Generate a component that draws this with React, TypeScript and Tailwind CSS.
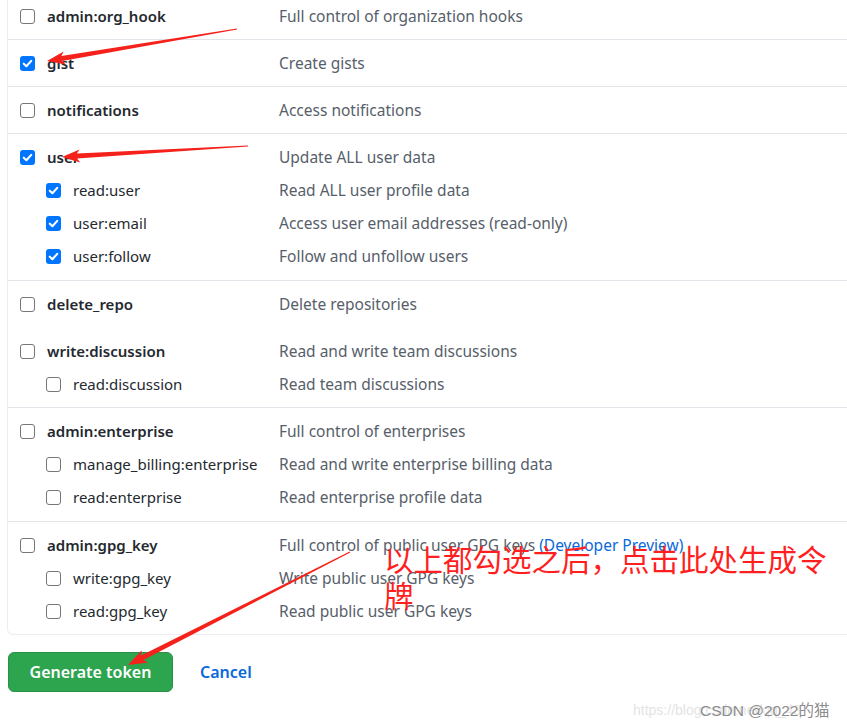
import React from "react";

type Item = { name: string; desc: React.ReactNode; checked?: boolean };
type Group = { top: Item; subs?: Item[]; border?: boolean; pb: string };

const groups: Group[] = [
  { top: { name: "admin:org_hook", desc: "Full control of organization hooks" }, border: true, pb: "pb-[6px]" },
  { top: { name: "gist", desc: "Create gists", checked: true }, border: true, pb: "pb-[6px]" },
  { top: { name: "notifications", desc: "Access notifications" }, border: true, pb: "pb-[6px]" },
  {
    top: { name: "user", desc: "Update ALL user data", checked: true },
    subs: [
      { name: "read:user", desc: "Read ALL user profile data", checked: true },
      { name: "user:email", desc: "Access user email addresses (read-only)", checked: true },
      { name: "user:follow", desc: "Follow and unfollow users", checked: true },
    ],
    border: true,
    pb: "pb-[7px]",
  },
  { top: { name: "delete_repo", desc: "Delete repositories" }, border: false, pb: "pb-[7px]" },
  {
    top: { name: "write:discussion", desc: "Read and write team discussions" },
    subs: [{ name: "read:discussion", desc: "Read team discussions" }],
    border: true,
    pb: "pb-[6px]",
  },
  {
    top: { name: "admin:enterprise", desc: "Full control of enterprises" },
    subs: [
      { name: "manage_billing:enterprise", desc: "Read and write enterprise billing data" },
      { name: "read:enterprise", desc: "Read enterprise profile data" },
    ],
    border: true,
    pb: "pb-[7px]",
  },
  {
    top: {
      name: "admin:gpg_key",
      desc: (
        <>
          Full control of public user GPG keys <span className="text-[#0969da]">(Developer Preview)</span>
        </>
      ),
    },
    subs: [
      { name: "write:gpg_key", desc: "Write public user GPG keys" },
      { name: "read:gpg_key", desc: "Read public user GPG keys" },
    ],
    border: false,
    pb: "pb-[6px]",
  },
];

function Box({ checked }: { checked?: boolean }) {
  if (checked)
    return (
      <span className="flex h-[15px] w-[15px] shrink-0 items-center justify-center rounded-[3px] bg-[#0075ff]">
        <svg width="11" height="11" viewBox="0 0 10 10">
          <path d="M1.6 5.2 L4 7.5 L8.4 2.6" stroke="white" strokeWidth="1.9" fill="none" strokeLinecap="round" strokeLinejoin="round" />
        </svg>
      </span>
    );
  return <span className="h-[15px] w-[15px] shrink-0 rounded-[3px] border-[1.5px] border-[#767676] bg-white" />;
}

function Row({ item, sub }: { item: Item; sub?: boolean }) {
  return (
    <div className="flex h-[33px] items-center">
      <div className={`flex w-[271px] shrink-0 items-center gap-[12px] ${sub ? "pl-[38px]" : "pl-[12px]"}`}>
        <Box checked={item.checked} />
        <span className={sub ? "font-normal text-[#24292f]" : "font-semibold text-[#24292f]"}>{item.name}</span>
      </div>
      <div className="text-[15.5px] text-[#57606a]">{item.desc}</div>
    </div>
  );
}

function arrowPoints(tx: number, ty: number, px: number, py: number, shaftW = 5, headW = 13, headL = 15) {
  const dx = px - tx;
  const dy = py - ty;
  const len = Math.hypot(dx, dy);
  const ux = dx / len;
  const uy = dy / len;
  const nx = -uy;
  const ny = ux;
  const bx = px - ux * headL;
  const by = py - uy * headL;
  const pts: [number, number][] = [
    [tx + nx * 0.6, ty + ny * 0.6],
    [bx + (nx * shaftW) / 2, by + (ny * shaftW) / 2],
    [bx - ux * 3 + (nx * headW) / 2, by - uy * 3 + (ny * headW) / 2],
    [px, py],
    [bx - ux * 3 - (nx * headW) / 2, by - uy * 3 - (ny * headW) / 2],
    [bx - (nx * shaftW) / 2, by - (ny * shaftW) / 2],
    [tx - nx * 0.6, ty - ny * 0.6],
  ];
  return pts.map((p) => p.join(",")).join(" ");
}

export default function App() {
  return (
    <div
      className="relative h-[727px] w-[847px] overflow-hidden bg-white text-[15px]"
      style={{ fontFamily: '"Noto Sans", "Noto Sans CJK SC", sans-serif' }}
    >
      <div className="mt-[-7px] ml-[7px] rounded-bl-[6px] border-l border-b border-[#eceef1]">
        {groups.map((g, i) => (
          <div key={i} className={`pt-[7px] ${g.pb} ${g.border ? "border-b border-[#e1e4e8]" : ""}`}>
            <Row item={g.top} />
            {g.subs?.map((s, j) => <Row key={j} item={s} sub />)}
          </div>
        ))}
      </div>

      <div className="mt-[17px] ml-[8px] flex items-center gap-[27px]">
        <button className="h-[40px] w-[165px] rounded-[6px] border border-[#2a9147] bg-[#2da44e] text-[16px] font-semibold text-white">
          Generate token
        </button>
        <span className="text-[16px] font-semibold text-[#0969da]">Cancel</span>
      </div>

      {/* annotations */}
      <svg className="pointer-events-none absolute left-0 top-0" width="847" height="727">
        <polygon points={arrowPoints(237, 29, 47, 61)} fill="#f5221b" />
        <polygon points={arrowPoints(248, 146, 62, 157)} fill="#f5221b" />
        <polygon points={arrowPoints(350, 552, 128, 665, 5, 14, 16)} fill="#f5221b" />
      </svg>
      <div
        className="absolute left-[384px] top-[540px] w-[462px] text-[29.5px] leading-[36px] text-[#ff1f1f]"
        style={{ fontFamily: '"Noto Sans CJK SC", sans-serif' }}
      >
        以上都勾选之后，点击此处生成令牌
      </div>

      <div className="absolute left-[633px] top-[700px] text-[14px] text-[#e4e4e4]" style={{ fontFamily: '"Liberation Sans", sans-serif' }}>
        https://blog.csdn.net/qq_43
      </div>
      <div
        className="absolute left-[700px] top-[699px] text-[15.5px] text-[#8c8c8c]"
        style={{ fontFamily: '"Liberation Sans", "Noto Sans CJK SC", sans-serif' }}
      >
        CSDN @2022的猫
      </div>
    </div>
  );
}
